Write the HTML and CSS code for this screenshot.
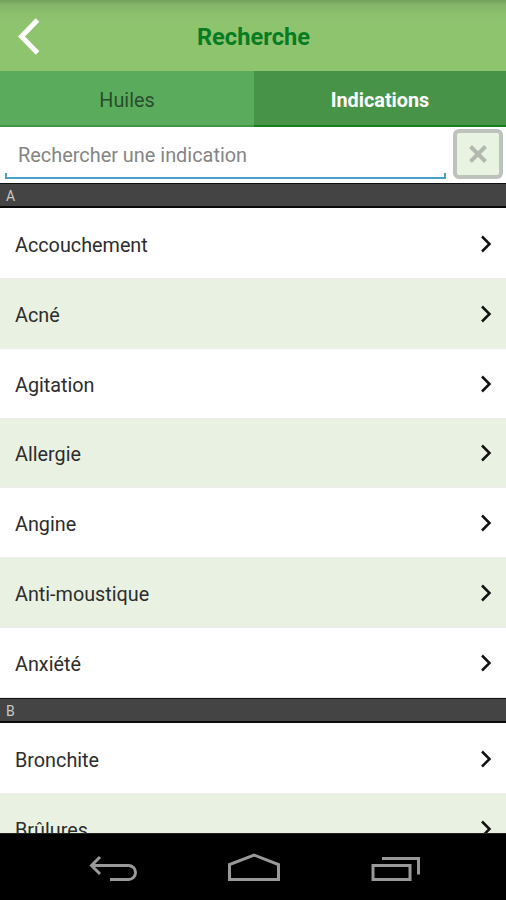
FILE: index.html
```html
<!DOCTYPE html>
<html lang="fr">
<head>
<meta charset="utf-8">
<title>Recherche</title>
<link rel="stylesheet" href="styles.css">
</head>
<body>
<svg width="0" height="0" class="defs"><defs>
<symbol id="chev" viewBox="0 0 14 20"><path d="M2 2.5 9.5 10 2 17.5"/></symbol>
</defs></svg>
<div class="app">
  <header class="bar">
    <svg class="back" width="24" height="40" viewBox="0 0 24 40"><path d="M20.500 3 4.500 19.500 20.500 36"/></svg>
    <h1>Recherche</h1>
  </header>
  <nav class="tabs">
    <div class="tab">Huiles</div>
    <div class="tab active">Indications</div>
  </nav>
  <div class="search">
    <div class="field">Rechercher une indication</div>
    <div class="clear"><svg width="20" height="20" viewBox="0 0 20 20"><path d="M2.500 2.500 17.500 17.500M17.500 2.500 2.500 17.500"/></svg></div>
  </div>
  <main class="list">
    <h2 class="section">A</h2>
    <div class="row">Accouchement<svg class="chev"><use href="#chev"/></svg></div>
    <div class="row alt">Acné<svg class="chev"><use href="#chev"/></svg></div>
    <div class="row">Agitation<svg class="chev"><use href="#chev"/></svg></div>
    <div class="row alt">Allergie<svg class="chev"><use href="#chev"/></svg></div>
    <div class="row">Angine<svg class="chev"><use href="#chev"/></svg></div>
    <div class="row alt">Anti-moustique<svg class="chev"><use href="#chev"/></svg></div>
    <div class="row">Anxiété<svg class="chev"><use href="#chev"/></svg></div>
    <h2 class="section">B</h2>
    <div class="row">Bronchite<svg class="chev"><use href="#chev"/></svg></div>
    <div class="row alt">Brûlures<svg class="chev"><use href="#chev"/></svg></div>
  </main>
  <footer class="system">
    <svg width="50" height="30" viewBox="88 853 50 30"><path d="M100 857 91.500 865.500 100 874M92 865.500H128.500A7 7 0 0 1 128.500 879.500H110"/></svg>
    <svg width="54" height="30" viewBox="227 853 54 30"><path d="M229.500 879.500V864.500L254 855 278.500 864.500V879.500Z"/></svg>
    <svg width="52" height="30" viewBox="370 853 52 30"><path d="M373 865.500H410V879.500H373ZM382 858.500H418.500V874.500"/></svg>
  </footer>
</div>
</body>
</html>
```
FILE: styles.css
```css
* { box-sizing: border-box; }
body {
  margin: 0;
  font-family: Roboto, "Liberation Sans", sans-serif;
  background: #fff;
}
.defs { display: block; }
svg { fill: none; flex: none; }
.app {
  display: flex;
  flex-direction: column;
  width: 506px;
  height: 900px;
  overflow: hidden;
}
.bar {
  display: grid;
  grid-template-columns: 60px 1fr 60px;
  align-items: center;
  flex: none;
  height: 71px;
  padding-top: 2px;
  background: linear-gradient(#72a05b 0, #84b568 5px, #8cc06d 14px, #8fc46f 26px);
}
.back {
  margin-left: 17px;
  stroke: #fff;
  stroke-width: 5;
}
.bar h1 {
  margin: 0;
  padding-left: 1px;
  text-align: center;
  font-size: 23.700px;
  font-weight: 700;
  color: #087c22;
}
.tabs {
  display: flex;
  flex: none;
  height: 56px;
}
.tab {
  flex: 0 0 254px;
  display: flex;
  align-items: center;
  justify-content: center;
  padding-top: 4px;
  background: #5bab5d;
  border-bottom: 2px solid #3f9844;
  color: #294d2b;
  font-size: 19.800px;
}
.tab.active {
  flex: 1;
  background: #479449;
  border-bottom-color: #16801f;
  color: #fff;
  font-weight: 700;
}
.search {
  display: flex;
  justify-content: space-between;
  flex: none;
  height: 56px;
  padding: 2px 3px 4px 5px;
}
.field {
  display: flex;
  align-items: center;
  align-self: flex-end;
  width: 441px;
  height: 48px;
  padding: 1px 12px 0 13px;
  color: #858585;
  font-size: 19.900px;
  background:
    linear-gradient(#4a9fc9, #4a9fc9) 0 100% / 100% 2px no-repeat,
    linear-gradient(#4a9fc9, #4a9fc9) 0 100% / 2px 6px no-repeat,
    linear-gradient(#4a9fc9, #4a9fc9) 100% 100% / 2px 6px no-repeat;
}
.clear {
  display: flex;
  align-items: center;
  justify-content: center;
  width: 50px;
  height: 50px;
  border: 4px solid #bdc2ba;
  border-radius: 6px;
  background: #e9f3e2;
}
.clear svg {
  stroke: #b3b8b0;
  stroke-width: 4;
}
.list {
  flex: 1;
  min-height: 0;
  overflow: hidden;
}
.section {
  height: 25px;
  margin: 0 0 1px;
  padding-left: 6px;
  border-top: 1px solid #111;
  border-bottom: 2px solid #0a0a0a;
  background: #444;
  color: #c8c8c8;
  font-size: 14px;
  font-weight: 400;
  line-height: 24px;
}
.row {
  display: flex;
  align-items: center;
  justify-content: space-between;
  height: 69.850px;
  padding: 4px 12px 0 15px;
  border-bottom: 1px solid #ececec;
  color: #2d2d2d;
  font-size: 19.800px;
}
.alt {
  background: #e9f2e2;
}
.chev {
  width: 14px;
  height: 20px;
  margin-top: -3px;
  stroke: #111;
  stroke-width: 2.500;
}
.system {
  display: flex;
  justify-content: space-between;
  flex: none;
  height: 67px;
  padding: 19px 84px 0 88px;
  border-top: 1px solid #222;
  background: #000;
}
.system svg {
  stroke: #999;
  stroke-width: 3;
}
```
